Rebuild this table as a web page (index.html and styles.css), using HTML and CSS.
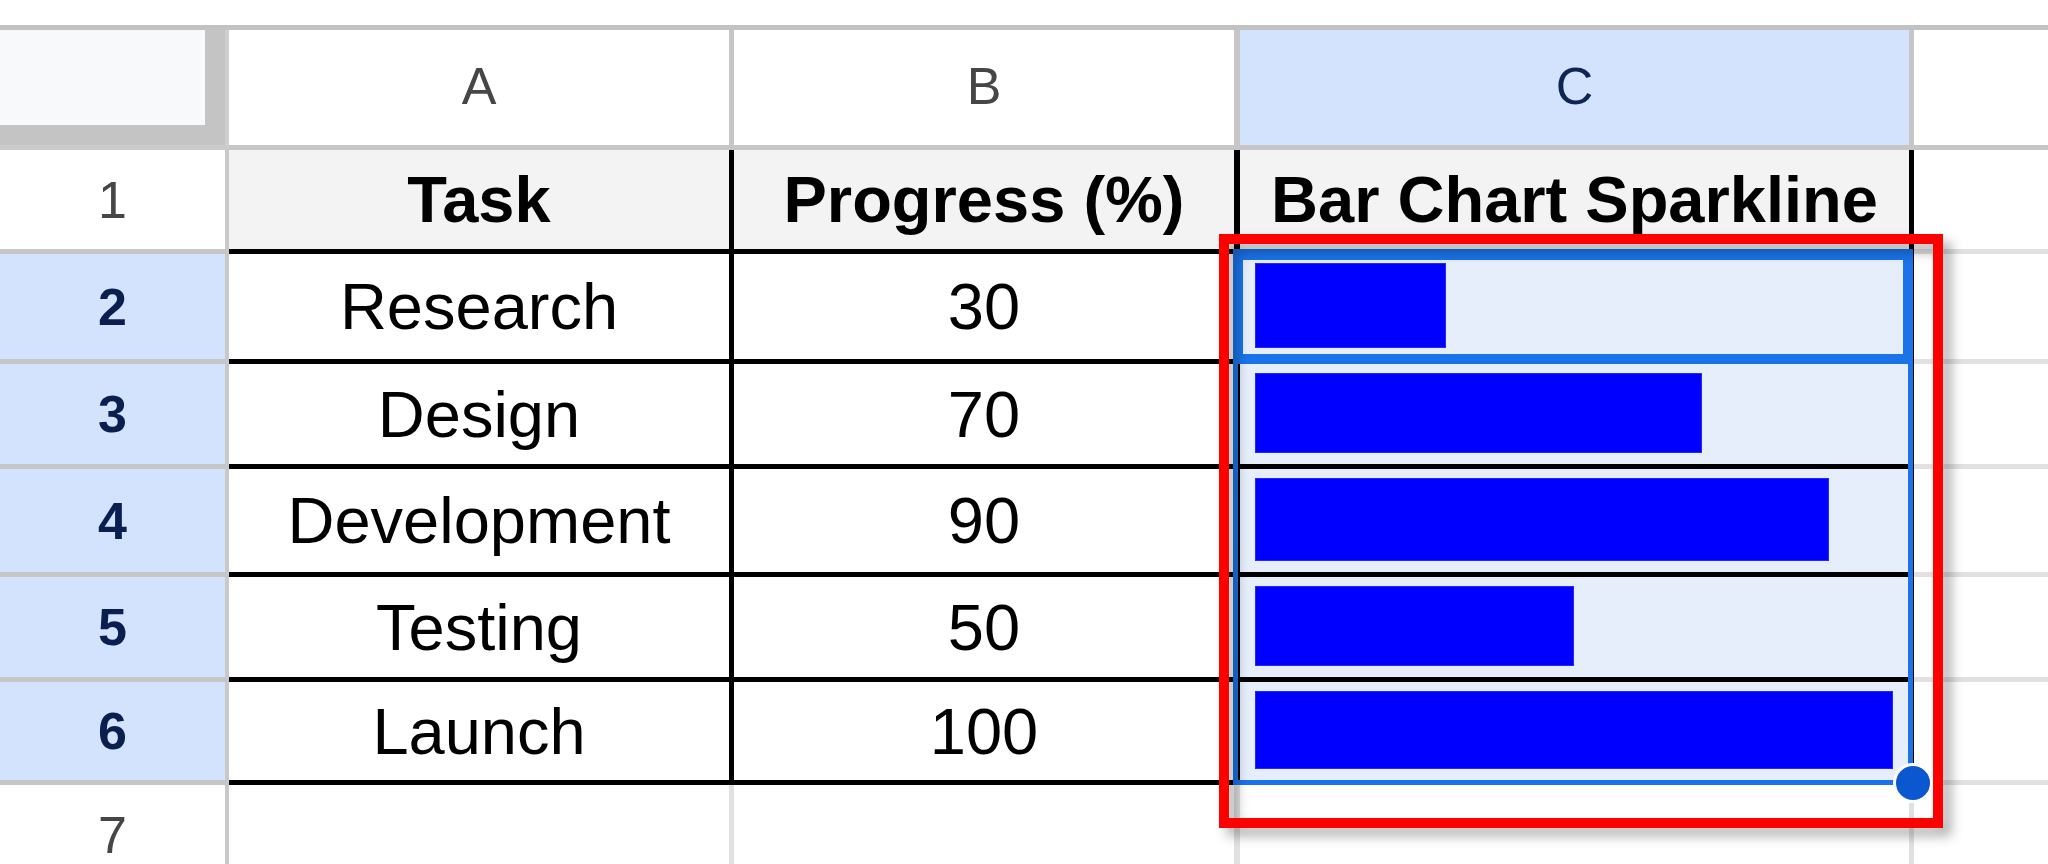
FILE: index.html
```html
<!DOCTYPE html>
<html lang="en">
<head>
<meta charset="utf-8">
<title>Bar Chart Sparkline</title>
<link rel="stylesheet" href="styles.css">
</head>
<body>
<div class="sheet">
  <div class="grid">
    <div class="corner"><div class="corner-inner"></div></div>
    <div class="colhdr col-a">A</div>
    <div class="colhdr col-b">B</div>
    <div class="colhdr col-c sel">C</div>
    <div class="colhdr col-d"></div>

    <div class="rowhdr r1">1</div>
    <div class="cell col-a r1 head">Task</div>
    <div class="cell col-b r1 head">Progress (%)</div>
    <div class="cell col-c r1 head">Bar Chart Sparkline</div>
    <div class="cell col-d r1 blank"></div>

    <div class="rowhdr sel r2">2</div>
    <div class="cell col-a r2">Research</div>
    <div class="cell col-b r2">30</div>
    <div class="cell col-c r2 spark"><div class="track"><div class="bar" style="width:30%"></div></div></div>
    <div class="cell col-d r2 blank"></div>

    <div class="rowhdr sel r3">3</div>
    <div class="cell col-a r3">Design</div>
    <div class="cell col-b r3">70</div>
    <div class="cell col-c r3 spark"><div class="track"><div class="bar" style="width:70%"></div></div></div>
    <div class="cell col-d r3 blank"></div>

    <div class="rowhdr sel r4">4</div>
    <div class="cell col-a r4">Development</div>
    <div class="cell col-b r4">90</div>
    <div class="cell col-c r4 spark"><div class="track"><div class="bar" style="width:90%"></div></div></div>
    <div class="cell col-d r4 blank"></div>

    <div class="rowhdr sel r5">5</div>
    <div class="cell col-a r5">Testing</div>
    <div class="cell col-b r5">50</div>
    <div class="cell col-c r5 spark"><div class="track"><div class="bar" style="width:50%"></div></div></div>
    <div class="cell col-d r5 blank"></div>

    <div class="rowhdr sel r6">6</div>
    <div class="cell col-a r6">Launch</div>
    <div class="cell col-b r6">100</div>
    <div class="cell col-c r6 spark"><div class="track"><div class="bar" style="width:100%"></div></div></div>
    <div class="cell col-d r6 blank"></div>

    <div class="rowhdr r7">7</div>
    <div class="cell col-a r7 empty"></div>
    <div class="cell col-b r7 empty"></div>
    <div class="cell col-c r7 empty"></div>
    <div class="cell col-d r7 blank"></div>
  </div>

  <div class="range"></div>
  <div class="active-cell"></div>
  <div class="fill-handle"></div>
  <div class="annotation"></div>
</div>
</body>
</html>
```

FILE: styles.css
```css
* { box-sizing: border-box; }

html, body {
  margin: 0;
  padding: 0;
  background: #ffffff;
  overflow: hidden;
}

.sheet {
  position: relative;
  width: 2048px;
  height: 864px;
  padding-top: 25px;
  font-family: "Liberation Sans", Arial, sans-serif;
  color: #000000;
}

.grid {
  display: grid;
  grid-template-columns: 229px 505px 506px 674px 1fr;
  grid-template-rows: 120px 104px 110px 105px 108px 105px 103px 105px;
  border-top: 5px solid #c2c2c2;
}

/* corner */
.corner {
  background: #c4c4c4;
  border-right: 4px solid #cfcfcf;
  border-bottom: 5px solid #cacaca;
}
.corner-inner {
  width: 205px;
  height: 95px;
  background: #f8f9fa;
}

/* column headers */
.colhdr {
  display: flex;
  align-items: center;
  justify-content: center;
  background: #ffffff;
  border-right: 5px solid #c6c6c6;
  border-bottom: 5px solid #c6c6c6;
  font-size: 52px;
  color: #444746;
  padding-bottom: 4px;
}
.colhdr.col-b { border-right-width: 6px; }
.colhdr.sel { background: #d3e3fd; color: #0f2553; }
.colhdr.col-d { border-right: none; }

/* row headers */
.rowhdr {
  display: flex;
  align-items: center;
  justify-content: center;
  background: #ffffff;
  border-right: 4px solid #c9c9c9;
  border-bottom: 5px solid #c6c6c6;
  font-size: 52px;
  color: #444746;
}
.rowhdr.sel {
  background: #d3e3fd;
  color: #0a1e4f;
  font-weight: bold;
}

/* data cells */
.cell {
  display: flex;
  align-items: center;
  justify-content: center;
  background: #ffffff;
  border-right: 5px solid #000000;
  border-bottom: 5px solid #000000;
  font-size: 65px;
  white-space: nowrap;
}
.cell.col-b { border-right-width: 6px; }

.cell.head {
  background: #f3f3f3;
  font-weight: bold;
}

.cell.blank {
  border-right: none;
  border-bottom: 5px solid #e1e1e1;
}

.cell.empty {
  border-right-color: #e1e1e1;
  border-bottom-color: #e1e1e1;
}

/* sparkline cells */
.cell.spark {
  background: #e6eefc;
  align-items: stretch;
  justify-content: flex-start;
  padding: 9px 16px 11px 15px;
}
.track {
  flex: 1;
  display: flex;
}
.bar {
  height: 100%;
  background: #0000ff;
  box-shadow: inset 0 0 0 1px #2626ff;
}

/* selection overlays */
.range {
  position: absolute;
  left: 1233px;
  top: 249px;
  width: 680px;
  height: 536px;
  border: 5px solid #1a73e8;
}

.active-cell {
  position: absolute;
  left: 1233px;
  top: 250px;
  width: 680px;
  height: 114px;
  border: 10px solid #1a73e8;
}

.fill-handle {
  position: absolute;
  left: 1893px;
  top: 763px;
  width: 40px;
  height: 40px;
  border-radius: 50%;
  background: #0b57d0;
  border: 3px solid #ffffff;
}

.annotation {
  position: absolute;
  left: 1219px;
  top: 234px;
  width: 724px;
  height: 594px;
  border: 10px solid #ff0000;
  filter: drop-shadow(8px 8px 6px rgba(0, 0, 0, 0.32));
}
```
